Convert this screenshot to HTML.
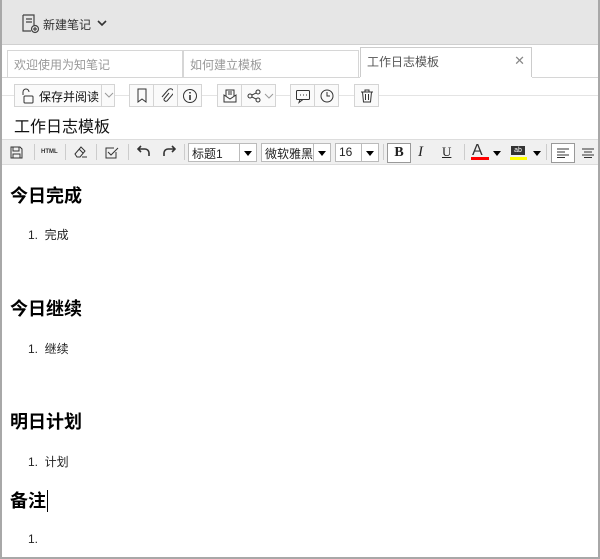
<!DOCTYPE html>
<html><head><meta charset="utf-8"><style>
*{margin:0;padding:0;box-sizing:border-box}
body{width:600px;height:559px;overflow:hidden;background:#fff;font-family:"Liberation Sans","Noto Sans CJK SC",sans-serif;position:relative;color:#222}
.a{position:absolute}
.frame{left:0;top:0;width:600px;height:559px;border:2px solid #a8a8a8;border-top:0;pointer-events:none}
.top{left:0;top:0;width:600px;height:45px;background:#e6e6e6;border-bottom:1px solid #d0d0d0}
.tab{top:50px;height:28px;border:1px solid #d6d6d6;border-bottom:0;font-size:12px;color:#999;padding:5px 6px}
.btn{top:84px;height:23px;border:1px solid #d4d4d4;background:#fafafa}
.ico{display:flex;align-items:center;justify-content:center}
.h{left:10px;font-size:18px;font-weight:bold;color:#000}
.li{left:28px;font-size:12px;color:#222}
.ft{top:139px;left:2px;width:596px;height:26px;background:#f0f0f0;border-top:1px solid #ddd;border-bottom:1px solid #ddd}
.sel{top:143px;height:19px;border:1px solid #bbb;background:#fff;font-size:12px;padding:1px 3px}
.sel:after{content:"";position:absolute;right:0;top:0;width:16px;height:17px;border-left:1px solid #bbb;background:linear-gradient(#fff,#fff)}
.tri{position:absolute;right:4px;top:7px;border:4px solid transparent;border-top:5px solid #000;border-bottom:0;z-index:2}
.sep{top:144px;width:1px;height:16px;background:#ccc}
</style></head><body>
<div class="a top"></div>
<svg class="a" style="left:20px;top:14px" width="20" height="20" viewBox="0 0 20 20" fill="none" stroke="#444" stroke-width="1.2"><path d="M3 1h11v10M3 1v16h8"/><path d="M6 5h6M6 8h6"/><circle cx="15" cy="15" r="3.5"/><path d="M15 13v4M13 15h4"/></svg>
<div class="a" style="left:43px;top:16px;font-size:12px;color:#333">新建笔记</div>
<svg class="a" style="left:97px;top:20px" width="10" height="7"><path d="M1 1l4 4 4-4" stroke="#333" stroke-width="1.6" fill="none"/></svg>
<div class="a" style="left:0;top:77px;width:600px;height:1px;background:#d6d6d6"></div>
<div class="a tab" style="left:7px;width:176px">欢迎使用为知笔记</div>
<div class="a tab" style="left:183px;width:176px">如何建立模板</div>
<div class="a tab" style="left:360px;top:47px;height:31px;width:172px;background:#fff;color:#555;border-color:#ccc">工作日志模板<span style="position:absolute;right:6px;top:5px;color:#888;font-size:13px">✕</span></div>
<div class="a" style="left:360px;top:77px;width:172px;height:1px;background:#fff"></div>
<div class="a" style="left:2px;top:95px;width:596px;height:1px;background:#e4e4e4"></div>
<div class="a btn" style="left:14px;width:101px;font-size:12px;color:#111;padding:3px 0 0 24px">保存并阅读<span style="position:absolute;left:86px;top:-1px;width:1px;height:23px;background:#d4d4d4"></span><svg style="position:absolute;left:89px;top:7px" width="10" height="6"><path d="M1 1l4 4 4-4" stroke="#999" fill="none"/></svg><svg style="position:absolute;left:5px;top:3px" width="16" height="16" fill="none" stroke="#333"><path d="M3 7V4a3 3 0 0 1 6 0"/><rect x="4" y="8" width="9" height="7" rx="1"/></svg></div>
<div class="a btn ico" style="left:129px;width:25px"><svg width="14" height="16" fill="none" stroke="#333"><path d="M3 1h8v13l-4-3-4 3z"/></svg></div>
<div class="a btn ico" style="left:153px;width:25px"><svg width="14" height="16" fill="none" stroke="#333"><path d="M10 5l-5 6a2 2 0 0 0 3 2l6-7a3 3 0 0 0-5-4L3 9"/></svg></div>
<div class="a btn ico" style="left:177px;width:25px"><svg width="16" height="16" fill="none" stroke="#333"><circle cx="8" cy="8" r="6.5"/><path d="M8 7v5M8 4v1.5" stroke-width="1.6"/></svg></div>
<div class="a btn ico" style="left:217px;width:25px"><svg width="16" height="16" fill="none" stroke="#333"><path d="M2 7l6 4 6-4v7H2zM4 8V2h8v6M6 4h4M6 6h4"/></svg></div>
<div class="a btn" style="left:241px;width:35px"><svg style="position:absolute;left:4px;top:3px" width="16" height="16" fill="none" stroke="#333"><circle cx="4" cy="8" r="2"/><circle cx="12" cy="4" r="2"/><circle cx="12" cy="12" r="2"/><path d="M6 7l4-2M6 9l4 2"/></svg><svg style="position:absolute;left:22px;top:8px" width="10" height="6"><path d="M1 1l4 4 4-4" stroke="#999" fill="none"/></svg></div>
<div class="a btn ico" style="left:290px;width:25px"><svg width="16" height="16" fill="none" stroke="#333"><rect x="1.5" y="2.5" width="13" height="9" rx="1"/><path d="M5 11.5l-1 3 4-3"/><path d="M5 7h1M8 7h1M11 7h1"/></svg></div>
<div class="a btn ico" style="left:314px;width:25px"><svg width="16" height="16" fill="none" stroke="#333"><circle cx="8" cy="8" r="6"/><path d="M8 4v4h3"/></svg></div>
<div class="a btn ico" style="left:354px;width:25px"><svg width="16" height="16" fill="none" stroke="#333"><path d="M2 4h12M6 4V2h4v2M3.5 4l1 10h7l1-10M6.5 6v6M9.5 6v6"/></svg></div>
<div class="a" style="left:14px;top:113px;font-size:16px;color:#111">工作日志模板</div>
<div class="a ft"></div>
<svg class="a" style="left:10px;top:146px" width="13" height="13" fill="none" stroke="#333"><path d="M1 1h9l2 2v9H1zM3 1v4h6V1M3 12V8h7v4"/></svg>
<div class="a sep" style="left:34px"></div>
<div class="a" style="left:41px;top:149px;font-size:6px;font-weight:bold;color:#333">HTML</div>
<div class="a sep" style="left:65px"></div>
<svg class="a" style="left:73px;top:145px" width="15" height="14" fill="none" stroke="#333"><path d="M2 9l6-7 4 4-5 6H4zM6 4l4 4M9 12h5"/></svg>
<div class="a sep" style="left:96px"></div>
<svg class="a" style="left:104px;top:145px" width="15" height="14" fill="none" stroke="#333"><path d="M12 7v6H2V3h8"/><path d="M4 7l3 3 7-7"/></svg>
<div class="a sep" style="left:128px"></div>
<svg class="a" style="left:137px;top:145px" width="14" height="12" fill="none" stroke="#333" stroke-width="1.6"><path d="M4 1L1 4l3 3M1 4h7a4 4 0 0 1 4 4v3"/></svg>
<svg class="a" style="left:162px;top:145px" width="14" height="12" fill="none" stroke="#333" stroke-width="1.6"><path d="M10 1l3 3-3 3M13 4H6a4 4 0 0 0-4 4v3"/></svg>
<div class="a sep" style="left:184px"></div>
<div class="a sel" style="left:188px;width:69px">标题1<i class="tri"></i></div>
<div class="a sel" style="left:261px;width:70px">微软雅黑<i class="tri"></i></div>
<div class="a sel" style="left:335px;width:44px">16<i class="tri"></i></div>
<div class="a sep" style="left:383px"></div>
<div class="a ico" style="left:387px;top:143px;width:24px;height:20px;border:1px solid #999;background:#fff;font-family:'Liberation Serif',serif;font-weight:bold;font-size:14px">B</div>
<div class="a" style="left:418px;top:144px;font-family:'Liberation Serif',serif;font-style:italic;font-size:15px">I</div>
<div class="a" style="left:442px;top:144px;font-family:'Liberation Serif',serif;font-size:13px;text-decoration:underline">U</div>
<div class="a sep" style="left:464px"></div>
<div class="a" style="left:472px;top:142px;font-size:16px;color:#333">A</div>
<div class="a" style="left:471px;top:157px;width:18px;height:3px;background:#f00"></div>
<i class="a tri" style="left:493px;right:auto;top:151px"></i>
<div class="a" style="left:511px;top:146px;width:14px;height:9px;background:#333;color:#fff;font-size:7px;text-align:center;line-height:9px">ab</div>
<div class="a" style="left:510px;top:157px;width:17px;height:3px;background:#ff0"></div>
<i class="a tri" style="left:533px;right:auto;top:151px"></i>
<div class="a sep" style="left:546px"></div>
<div class="a ico" style="left:551px;top:143px;width:24px;height:20px;border:1px solid #999;background:#fff"><svg width="12" height="10" stroke="#333"><path d="M0 1h12M0 4h8M0 7h12M0 9.5h8"/></svg></div>
<svg class="a" style="left:582px;top:148px" width="12" height="10" stroke="#333"><path d="M0 1h12M2 4h8M0 7h12M2 9.5h8"/></svg>
<div class="a h" style="top:182px">今日完成</div>
<div class="a li" style="top:226px">1.&nbsp;&nbsp;完成</div>
<div class="a h" style="top:295px">今日继续</div>
<div class="a li" style="top:340px">1.&nbsp;&nbsp;继续</div>
<div class="a h" style="top:408px">明日计划</div>
<div class="a li" style="top:453px">1.&nbsp;&nbsp;计划</div>
<div class="a h" style="top:487px">备注<span style="display:inline-block;width:1px;height:22px;background:#000;vertical-align:-5px;margin-left:1px"></span></div>
<div class="a li" style="top:532px">1.</div>
<div class="a frame"></div>
</body></html>
